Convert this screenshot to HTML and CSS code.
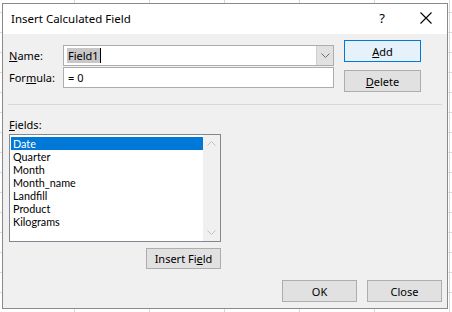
FILE: index.html
```html
<!DOCTYPE html>
<html lang="en">
<head>
  <meta charset="UTF-8">
  <title>Insert Calculated Field</title>
  <link rel="stylesheet" href="styles.css">
</head>
<body>
  <div class="dialog">
    <div class="titlebar">
      <span class="title">Insert Calculated Field</span>
      <span class="help">?</span>
      <span class="close">
        <svg width="12" height="12" viewBox="0 0 12 12"><path d="M0.5 0.5L11.5 11.5M11.5 0.5L0.5 11.5" stroke="#000" stroke-width="1.1" fill="none"/></svg>
      </span>
    </div>

    <div class="content">
      <div class="top">
        <div class="inputs">
          <div class="row">
            <span class="label"><u>N</u>ame:</span>
            <div class="combo">
              <span class="sel">Field1</span><span class="caret"></span>
              <span class="drop">
                <svg width="9" height="5" viewBox="0 0 9 5"><path d="M0.5 0.5L4.5 4.5L8.5 0.5" stroke="#6d6d6d" fill="none"/></svg>
              </span>
            </div>
          </div>
          <div class="row">
            <span class="label">For<u>m</u>ula:</span>
            <div class="textbox">= 0</div>
          </div>
        </div>
        <div class="side-buttons">
          <button class="btn btn-default"><u>A</u>dd</button>
          <button class="btn"><u>D</u>elete</button>
        </div>
      </div>

      <div class="separator"></div>

      <div class="fields-label"><u>F</u>ields:</div>
      <div class="list-area">
        <div class="listbox">
          <ul class="items">
            <li class="selected">Date</li>
            <li>Quarter</li>
            <li>Month</li>
            <li>Month_name</li>
            <li>Landfill</li>
            <li>Product</li>
            <li>Kilograms</li>
          </ul>
          <div class="scrollbar">
            <span class="arrow">
              <svg width="9" height="5" viewBox="0 0 9 5"><path d="M0.5 4.5L4.5 0.5L8.5 4.5" stroke="#c2c2c2" fill="none"/></svg>
            </span>
            <span class="arrow">
              <svg width="9" height="5" viewBox="0 0 9 5"><path d="M0.5 0.5L4.5 4.5L8.5 0.5" stroke="#c2c2c2" fill="none"/></svg>
            </span>
          </div>
        </div>
        <button class="btn insert">Insert Fi<u>e</u>ld</button>
      </div>

      <div class="footer">
        <button class="btn">OK</button>
        <button class="btn">Close</button>
      </div>
    </div>
  </div>
</body>
</html>
```

FILE: styles.css
```css
body {
  margin: 0;
  width: 452px;
  height: 312px;
  overflow: hidden;
  font-family: "Noto Sans", "Open Sans", sans-serif;
  font-size: 11px;
  color: #000;
  background-color: #fff;
  background-image:
    repeating-linear-gradient(90deg, transparent 0 74px, #d8d8d8 74px 75px),
    repeating-linear-gradient(0deg, transparent 0 19px, #d8d8d8 19px 20px);
}
u {
  text-decoration: underline;
  text-underline-offset: 1px;
  text-decoration-thickness: 1px;
}
.dialog {
  box-sizing: border-box;
  margin: 3px 0 0 2px;
  width: 446px;
  height: 306px;
  border: 1px solid #8a8a8a;
  background: #f0f0f0;
  display: flex;
  flex-direction: column;
}
/* barra de titulo */
.titlebar {
  height: 30px;
  background: #fff;
  display: flex;
  align-items: center;
  padding: 0 0 2px 8px;
  box-sizing: border-box;
  font-size: 12px;
}
.title {
  flex: 1;
  font-size: 11.5px;
}
.help {
  width: 46px;
  text-align: center;
  font-size: 13px;
  margin-right: -2px;
}
.close {
  width: 46px;
  height: 28px;
  display: flex;
  align-items: center;
  justify-content: center;
  margin-right: -2px;
}
.content {
  flex: 1;
  padding: 0 5px 0 6px;
  display: flex;
  flex-direction: column;
}
.top {
  display: flex;
  align-items: flex-start;
}
.inputs {
  margin-top: 11px;
  display: flex;
  flex-direction: column;
  gap: 1px;
}
.row {
  display: flex;
  align-items: center;
}
.label {
  width: 54px;
}
.combo, .textbox {
  box-sizing: border-box;
  width: 271px;
  height: 21px;
  border: 1px solid #adadad;
  background: #fff;
  display: flex;
  align-items: center;
  padding-left: 3px;
  position: relative;
}
.textbox {
  padding-left: 4px;
}
.sel {
  background: #c8c8c8;
  padding: 0 1px;
  line-height: 15px;
}
.caret {
  width: 1px;
  height: 15px;
  background: #000;
}
.drop {
  position: absolute;
  right: 0;
  top: 0;
  bottom: 0;
  width: 16px;
  background: #e1e1e1;
  border-left: 1px solid #cfcfcf;
  display: flex;
  align-items: center;
  justify-content: center;
}
.side-buttons {
  margin: 6px 0 0 10px;
  display: flex;
  flex-direction: column;
  gap: 8px;
}
.btn {
  box-sizing: border-box;
  width: 77px;
  height: 22px;
  border: 1px solid #adadad;
  background: #e1e1e1;
  font-family: inherit;
  font-size: 11px;
  color: #000;
  padding: 0;
}
.btn-default {
  background: #e5f1fb;
  border-color: #0078d7;
}
.separator {
  margin: 12px 0 0 -1px;
  width: 434px;
  height: 1px;
  background: #d7d7d7;
}
.fields-label {
  margin-top: 12px;
  line-height: 16px;
}
.list-area {
  margin-top: 1px;
  width: 212px;
  display: flex;
  flex-direction: column;
  align-items: flex-end;
}
.listbox {
  box-sizing: border-box;
  width: 212px;
  height: 108px;
  border: 1px solid #828790;
  background: #fff;
  display: flex;
}
.items {
  list-style: none;
  margin: 0;
  padding: 2px 0 0 1px;
  flex: 1;
  font-family: Lato, "Noto Sans", sans-serif;
  font-size: 10.8px;
}
.items li {
  height: 13px;
  line-height: 13px;
  padding-left: 2px;
}
.items li.selected {
  background: #0078d7;
  color: #fff;
}
.scrollbar {
  width: 17px;
  background: #f0f0f0;
  display: flex;
  flex-direction: column;
  justify-content: space-between;
}
.arrow {
  height: 17px;
  display: flex;
  align-items: center;
  justify-content: center;
}
.insert {
  margin-top: 6px;
  width: 75px;
  height: 21px;
}
.footer {
  margin-top: 11px;
  display: flex;
  justify-content: flex-end;
  gap: 10px;
}
.footer .btn {
  width: 75px;
}
```
